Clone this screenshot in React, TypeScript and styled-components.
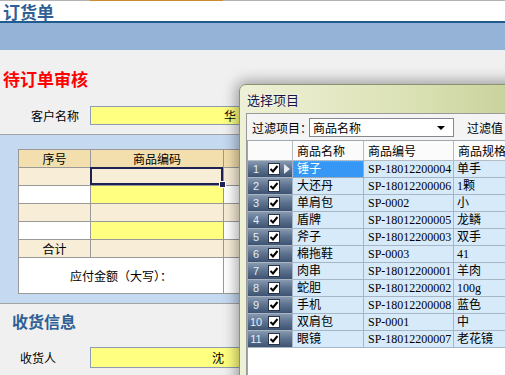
import React from 'react'
import styled, { createGlobalStyle } from 'styled-components'

const goods = [
  ['锤子', 'SP-18012200004', '单手'],
  ['大还丹', 'SP-18012200006', '1颗'],
  ['单肩包', 'SP-0002', '小'],
  ['盾牌', 'SP-18012200005', '龙鳞'],
  ['斧子', 'SP-18012200003', '双手'],
  ['棉拖鞋', 'SP-0003', '41'],
  ['肉串', 'SP-18012200001', '羊肉'],
  ['蛇胆', 'SP-18012200002', '100g'],
  ['手机', 'SP-18012200008', '蓝色'],
  ['双肩包', 'SP-0001', '中'],
  ['眼镜', 'SP-18012200007', '老花镜'],
]

type Tone = 'head' | 'beige' | 'white' | 'yellow'

const toneColor: Record<Tone, string> = {
  head: '#f3dfad',
  beige: '#f8eed8',
  white: '#ffffff',
  yellow: '#ffff80',
}

const orderRows: { label: string; tones: Tone[] }[] = [
  { label: '', tones: ['beige', 'beige', 'beige'] },
  { label: '', tones: ['white', 'yellow', 'white'] },
  { label: '', tones: ['beige', 'beige', 'beige'] },
  { label: '', tones: ['white', 'yellow', 'white'] },
  { label: '合计', tones: ['beige', 'beige', 'beige'] },
]

function CheckMark() {
  return (
    <svg width="10" height="10" viewBox="0 0 10 10">
      <path d="M1.5 5 L4 7.5 L8.5 2" fill="none" stroke="#000" strokeWidth="2" />
    </svg>
  )
}

export default function App() {
  return (
    <Page>
      <GlobalStyle />
      <TopStrip>
        <StripAccent />
      </TopStrip>
      <Header>订货单</Header>
      <Band />

      <SectionTitle $color="#ff0000" $size={17} $indent={3} $top={17}>待订单审核</SectionTitle>
      <FieldRow $top={15}>
        <FieldLabel $indent={31}>客户名称</FieldLabel>
        <FieldInput $h={19} $pad={8}>华</FieldInput>
      </FieldRow>

      <Panel>
        <OrderGrid>
          <OrderCell $tone="head" $center>序号</OrderCell>
          <OrderCell $tone="head" $center>商品编码</OrderCell>
          <OrderCell $tone="head" $center />
          {orderRows.map((row, i) =>
            row.tones.map((tone, j) => (
              <OrderCell key={`${i}-${j}`} $tone={tone} $center $active={i === 0 && j === 1}>
                {j === 0 ? row.label : ''}
              </OrderCell>
            ))
          )}
          <OrderCell $tone="white" $center $span={2} $tall>应付金额（大写）：</OrderCell>
          <OrderCell $tone="white" $tall />
        </OrderGrid>
      </Panel>

      <SectionTitle $color="#2f5f95" $size={16} $indent={12} $top={5}>收货信息</SectionTitle>
      <FieldRow $top={14}>
        <FieldLabel $indent={20}>收货人</FieldLabel>
        <FieldInput $h={21} $pad={20}>沈</FieldInput>
      </FieldRow>

      <Dialog>
        <DialogTitle>选择项目</DialogTitle>
        <DialogBody>
          <FilterRow>
            <FilterLabel>过滤项目：</FilterLabel>
            <Combo>
              商品名称
              <ComboArrow />
            </Combo>
            <FilterLabel>过滤值</FilterLabel>
          </FilterRow>
          <GridArea>
            <PickGrid>
              <HeadCell />
              <HeadCell>商品名称</HeadCell>
              <HeadCell>商品编号</HeadCell>
              <HeadCell>商品规格</HeadCell>
              {goods.map((g, i) => (
                <React.Fragment key={g[1]}>
                  <RowHeader>
                    <RowNum>{i + 1}</RowNum>
                    <CheckBox><CheckMark /></CheckBox>
                    {i === 0 && <RowPointer />}
                  </RowHeader>
                  <DataCell $selected={i === 0}>{g[0]}</DataCell>
                  <DataCell>{g[1]}</DataCell>
                  <DataCell $tight>{g[2]}</DataCell>
                </React.Fragment>
              ))}
            </PickGrid>
          </GridArea>
        </DialogBody>
      </Dialog>
    </Page>
  )
}

const GlobalStyle = createGlobalStyle`
  html, body {
    margin: 0;
    padding: 0;
  }
  body {
    background: #f0f0f0;
    font-family: "Noto Sans CJK SC", sans-serif;
    font-size: 12px;
    color: #000;
  }
`

const Page = styled.div`
  position: relative;
  width: 505px;
  height: 375px;
  overflow: hidden;
  background: #f0f0f0;
`

const TopStrip = styled.div`
  display: flex;
  height: 1px;
  background: #b3b3b3;
`

const StripAccent = styled.div`
  margin-left: 90px;
  width: 133px;
  background: #cf8a2c;
`

const Header = styled.header`
  display: flex;
  align-items: center;
  height: 18px;
  padding: 2px 0 0 3px;
  background: #fff;
  border-bottom: 2px solid #1f5b8e;
  font: bold 17px/18px "Noto Sans CJK SC", sans-serif;
  color: #2f5f95;
`

const Band = styled.div`
  height: 27px;
  background: #95b3d7;
`

const SectionTitle = styled.h2<{ $color: string; $size: number; $indent: number; $top: number }>`
  margin: ${p => p.$top}px 0 0;
  padding-left: ${p => p.$indent}px;
  font: bold ${p => p.$size}px/24px "Noto Sans CJK SC", sans-serif;
  color: ${p => p.$color};
`

const FieldRow = styled.div<{ $top: number }>`
  display: flex;
  align-items: center;
  margin-top: ${p => p.$top}px;
`

const FieldLabel = styled.div<{ $indent: number }>`
  width: 90px;
  box-sizing: border-box;
  padding-left: ${p => p.$indent}px;
`

const FieldInput = styled.div<{ $h: number; $pad: number }>`
  width: 155px;
  height: ${p => p.$h}px;
  line-height: ${p => p.$h - 2}px;
  box-sizing: border-box;
  padding-right: ${p => p.$pad}px;
  text-align: right;
  background: #ffff80;
  border: 1px solid #8d9db3;
`

const Panel = styled.div`
  margin-top: 9px;
  padding: 14px 0 9px 18px;
  background: #c5d9f1;
  border-top: 1px solid #a3a3a3;
  border-bottom: 1px solid #a3a3a3;
`

const OrderGrid = styled.div`
  display: grid;
  grid-template-columns: 72px 133px 100px;
  grid-template-rows: repeat(6, 18px) 36px;
  width: max-content;
  border-top: 1px solid #999;
  border-left: 1px solid #999;
`

const OrderCell = styled.div<{ $tone: Tone; $center?: boolean; $span?: number; $tall?: boolean; $active?: boolean }>`
  position: relative;
  box-sizing: border-box;
  grid-column: span ${p => p.$span ?? 1};
  line-height: ${p => (p.$tall ? 35 : 17)}px;
  text-align: ${p => (p.$center ? 'center' : 'left')};
  background: ${p => toneColor[p.$tone]};
  border-right: 1px solid #999;
  border-bottom: 1px solid #999;
  ${p =>
    p.$active &&
    `
    box-shadow: inset 0 0 0 2px #1c2252;
    margin: -1px 0 0 -1px;
    &::after {
      content: '';
      position: absolute;
      right: -3px;
      bottom: -3px;
      width: 5px;
      height: 5px;
      background: #1c2252;
      border: 1px solid #fff;
      z-index: 1;
    }
  `}
`

const Dialog = styled.div`
  position: absolute;
  left: 239px;
  top: 84px;
  width: 300px;
  height: 320px;
  display: flex;
  flex-direction: column;
  box-sizing: border-box;
  padding-left: 6px;
  border: 1px solid #8a9270;
  border-radius: 7px 7px 0 0;
  background: linear-gradient(to right, #eef1d6, #dce2b6 55%, #c4cf96);
  box-shadow: 0 0 14px 3px rgba(0, 0, 0, 0.35);
`

const DialogTitle = styled.div`
  height: 28px;
  padding-left: 1px;
  font: 13px/30px "Noto Sans CJK SC", sans-serif;
  color: #15154a;
  text-shadow: 0 0 3px #fff;
`

const DialogBody = styled.div`
  flex: 1;
  display: flex;
  flex-direction: column;
  background: #f4f4f4;
  border-top: 1px solid #9a9a9a;
  border-left: 1px solid #9a9a9a;
`

const FilterRow = styled.div`
  display: flex;
  align-items: center;
  gap: 13px;
  height: 26px;
  padding-left: 5px;
`

const FilterLabel = styled.span`
  white-space: nowrap;
  &:first-child {
    width: 44px;
  }
`

const Combo = styled.div`
  position: relative;
  width: 145px;
  height: 19px;
  box-sizing: border-box;
  padding-left: 3px;
  line-height: 17px;
  background: #fff;
  border: 1px solid #828790;
`

const ComboArrow = styled.span`
  position: absolute;
  right: 8px;
  top: 7px;
  border-left: 4px solid transparent;
  border-right: 4px solid transparent;
  border-top: 4px solid #000;
`

const GridArea = styled.div`
  flex: 1;
  background: #fff;
  border-left: 1px solid #9aa6b2;
`

const PickGrid = styled.div`
  display: grid;
  grid-template-columns: 45px 71px 90px 80px;
  grid-template-rows: 20px;
  grid-auto-rows: 17px;
  border-top: 1px solid #a0a8b0;
`

const HeadCell = styled.div`
  box-sizing: border-box;
  padding-left: 4px;
  line-height: 19px;
  background: #fbfbfb;
  border-right: 1px solid #b4bcc6;
  border-bottom: 1px solid #b4bcc6;
`

const RowHeader = styled.div`
  display: flex;
  align-items: center;
  box-sizing: border-box;
  background: linear-gradient(to bottom, #8899b0 0%, #5e7491 45%, #3d5371 100%);
  border-right: 1px solid #a7b6c6;
  border-bottom: 1px solid #a9b5c3;
`

const RowNum = styled.span`
  width: 16px;
  text-align: center;
  font: 11px "Liberation Sans", sans-serif;
  color: #e6edf5;
`

const CheckBox = styled.span`
  display: flex;
  align-items: center;
  justify-content: center;
  width: 12px;
  height: 12px;
  margin-left: 4px;
  box-sizing: border-box;
  background: #fff;
  border: 1px solid #2a3648;
`

const RowPointer = styled.span`
  margin-left: 4px;
  border-left: 6px solid #e4eaf2;
  border-top: 5px solid transparent;
  border-bottom: 5px solid transparent;
`

const DataCell = styled.div<{ $selected?: boolean; $tight?: boolean }>`
  box-sizing: border-box;
  padding-left: ${p => (p.$tight ? 3 : 4)}px;
  white-space: nowrap;
  overflow: hidden;
  font: 12px/16px "Liberation Serif", "Noto Sans CJK SC", serif;
  background: ${p => (p.$selected ? '#3797f5' : '#d7eafa')};
  color: ${p => (p.$selected ? '#fff' : '#000')};
  border-right: 1px solid #a7b6c6;
  border-bottom: 1px solid #a7b6c6;
  outline: ${p => (p.$selected ? '1px dotted #f08a2a' : 'none')};
  outline-offset: -1px;
`
